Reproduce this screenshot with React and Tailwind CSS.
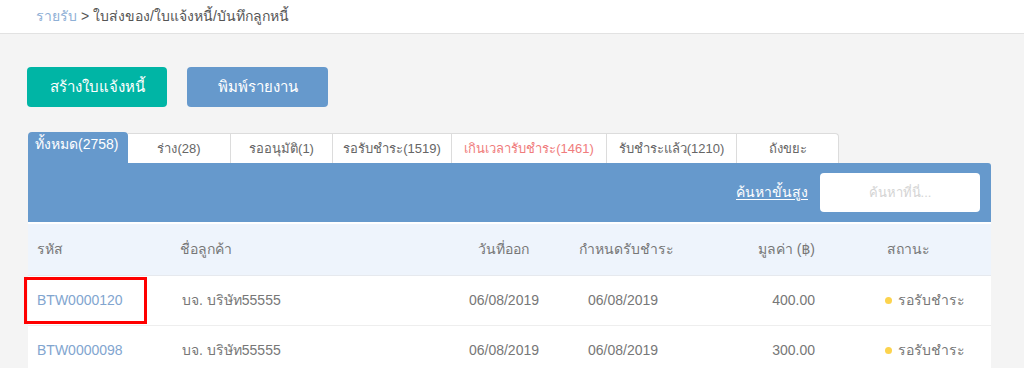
import React from "react";

const tabs = [
  { label: "ทั้งหมด(2758)", w: "w-[100px]", active: true },
  { label: "ร่าง(28)", w: "w-[103px]" },
  { label: "รออนุมัติ(1)", w: "w-[102px]" },
  { label: "รอรับชำระ(1519)", w: "w-[119px]" },
  { label: "เกินเวลารับชำระ(1461)", w: "w-[155px]", red: true },
  { label: "รับชำระแล้ว(1210)", w: "w-[130px]" },
  { label: "ถังขยะ", w: "w-[102px]", last: true },
];

const rows = [
  { code: "BTW0000120", name: "บจ. บริษัท55555", issued: "06/08/2019", due: "06/08/2019", amount: "400.00", status: "รอรับชำระ", boxed: true },
  { code: "BTW0000098", name: "บจ. บริษัท55555", issued: "06/08/2019", due: "06/08/2019", amount: "300.00", status: "รอรับชำระ" },
];

export default function App() {
  return (
    <div
      className="w-[1024px] h-[368px] overflow-hidden bg-[#f4f4f4] text-[#666]"
      style={{ fontFamily: '"Liberation Sans", "Noto Sans", "DejaVu Sans", sans-serif' }}
    >
      <div className="h-[34px] bg-white border-b border-[#e2e2e2] flex items-center pl-[36px] text-[14px]">
        <span className="text-[#8fb0d6]">รายรับ</span>
        <span className="text-[#555] ml-1">&gt; ใบส่งของ/ใบแจ้งหนี้/บันทึกลูกหนี้</span>
      </div>

      <div className="pl-[27px] pt-[33px] flex gap-[20px]">
        <button className="w-[140px] h-[40px] rounded-[4px] bg-[#00b5a5] text-white text-[15px]">
          สร้างใบแจ้งหนี้
        </button>
        <button className="w-[141px] h-[40px] rounded-[4px] bg-[#6699cc] text-white text-[15px]">
          พิมพ์รายงาน
        </button>
      </div>

      <div className="ml-[28px] w-[963px] mt-[25px]">
        <div className="flex h-[31px] items-end whitespace-nowrap">
          {tabs.map((t) =>
            t.active ? (
              <div
                key={t.label}
                className={`${t.w} h-[31px] bg-[#6699cc] text-white text-[14px] rounded-t-[4px] pl-[7px] leading-[24px]`}
              >
                {t.label}
              </div>
            ) : (
              <div
                key={t.label}
                className={`${t.w} h-[30px] bg-white border-t border-r border-[#dcdcdc] flex items-center justify-center text-[13px] ${
                  t.red ? "text-[#f07c7c]" : "text-[#666]"
                } ${t.last ? "rounded-tr-[4px]" : ""}`}
              >
                {t.label}
              </div>
            )
          )}
        </div>

        <div className="h-[59px] bg-[#6699cc] rounded-tr-[3px] flex items-center justify-end pr-[11px] gap-[12px]">
          <a className="text-white text-[14px] underline underline-offset-2">ค้นหาขั้นสูง</a>
          <div className="w-[160px] h-[39px] bg-white rounded-[4px] flex items-center justify-center text-[13px] text-[#d4d4d4]">
            ค้นหาที่นี่...
          </div>
        </div>

        <div className="bg-white text-[14px] pt-[2px]">
          <div className="h-[52px] bg-[#eef4fc] border-b border-[#e6e9ee] flex items-center text-[#777]">
            <div className="w-[142px] pl-[9px]">รหัส</div>
            <div className="w-[230px] pl-[10px]">ชื่อลูกค้า</div>
            <div className="w-[140px] text-right pr-[11px]">วันที่ออก</div>
            <div className="w-[160px] pl-[39px]">กำหนดรับชำระ</div>
            <div className="w-[115px] text-right">มูลค่า (฿)</div>
            <div className="pl-[72px]">สถานะ</div>
          </div>
          {rows.map((r) => (
            <div key={r.code} className="h-[50px] border-b border-[#eeeeee] flex items-center text-[#777]">
              <div className="w-[142px] h-full pl-[9px] relative flex items-center">
                <span className="text-[#82a5cf]">{r.code}</span>
                {r.boxed && (
                  <div className="absolute left-[-4px] top-[1px] w-[123px] h-[47px] border-[3px] border-[#ff0000]" />
                )}
              </div>
              <div className="w-[230px] pl-[12px]">{r.name}</div>
              <div className="w-[140px] text-right pr-[1px]">{r.issued}</div>
              <div className="w-[160px] pl-[48px]">{r.due}</div>
              <div className="w-[115px] text-right">{r.amount}</div>
              <div className="pl-[70px] flex items-center gap-[6px]">
                <span className="w-[7px] h-[7px] rounded-full bg-[#fcd34d]" />
                {r.status}
              </div>
            </div>
          ))}
        </div>
      </div>
    </div>
  );
}
